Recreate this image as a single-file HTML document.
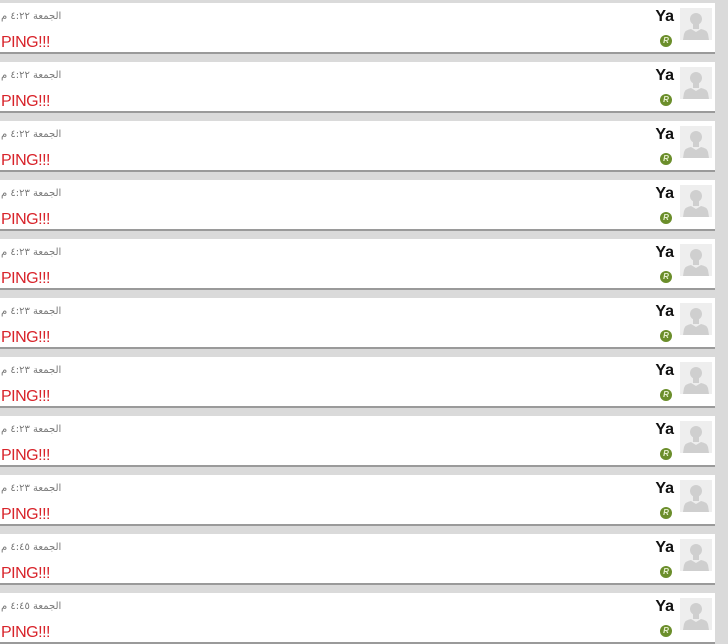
<!DOCTYPE html><html><head><meta charset="utf-8"><style>
body{margin:0;width:728px;height:640px;overflow:hidden;background:#dadada;font-family:"Liberation Sans",sans-serif}
.r{position:absolute;left:0;width:715px;height:49px;background:#fff;border-bottom:2px solid #9a9a9a}
.t{position:absolute;left:1px;top:8px;font-size:10px;color:#777;direction:rtl;unicode-bidi:embed;white-space:nowrap;font-family:"DejaVu Sans",sans-serif}
.p{position:absolute;left:1px;top:31px;font-size:16px;color:#d8232a;letter-spacing:-0.5px}
.n{position:absolute;right:41px;top:5px;font-size:16px;font-weight:bold;color:#111}
.b{position:absolute;left:660px;top:32px;width:12px;height:12px;border-radius:50%;background:#6b8e2b;color:#e8f0d0;font-size:8px;font-weight:bold;text-align:center;line-height:12px;font-style:italic}
.a{position:absolute;left:680px;top:5px;width:32px;height:32px;background:#eee;overflow:hidden}
</style></head><body>
<script>
var t=["٤:٢٢","٤:٢٢","٤:٢٢","٤:٢٣","٤:٢٣","٤:٢٣","٤:٢٣","٤:٢٣","٤:٢٣","٤:٤٥","٤:٤٥"];
var h="";
for(var i=0;i<11;i++){h+='<div class="r" style="top:'+(3+59*i)+'px"><div class="t">الجمعة '+t[i]+' م</div><div class="p">PING!!!</div><div class="n">Ya</div><div class="b">R</div><div class="a"><svg width="32" height="32"><circle cx="16" cy="11" r="6" fill="#cfcfcf"/><rect x="13" y="15" width="6" height="6" fill="#cfcfcf"/><path d="M3 32 L4 26 Q5 22 11 21 L16 24 L21 21 Q27 22 28 26 L29 32Z" fill="#cfcfcf"/></svg></div></div>';}
document.write(h);
</script>
</body></html>
